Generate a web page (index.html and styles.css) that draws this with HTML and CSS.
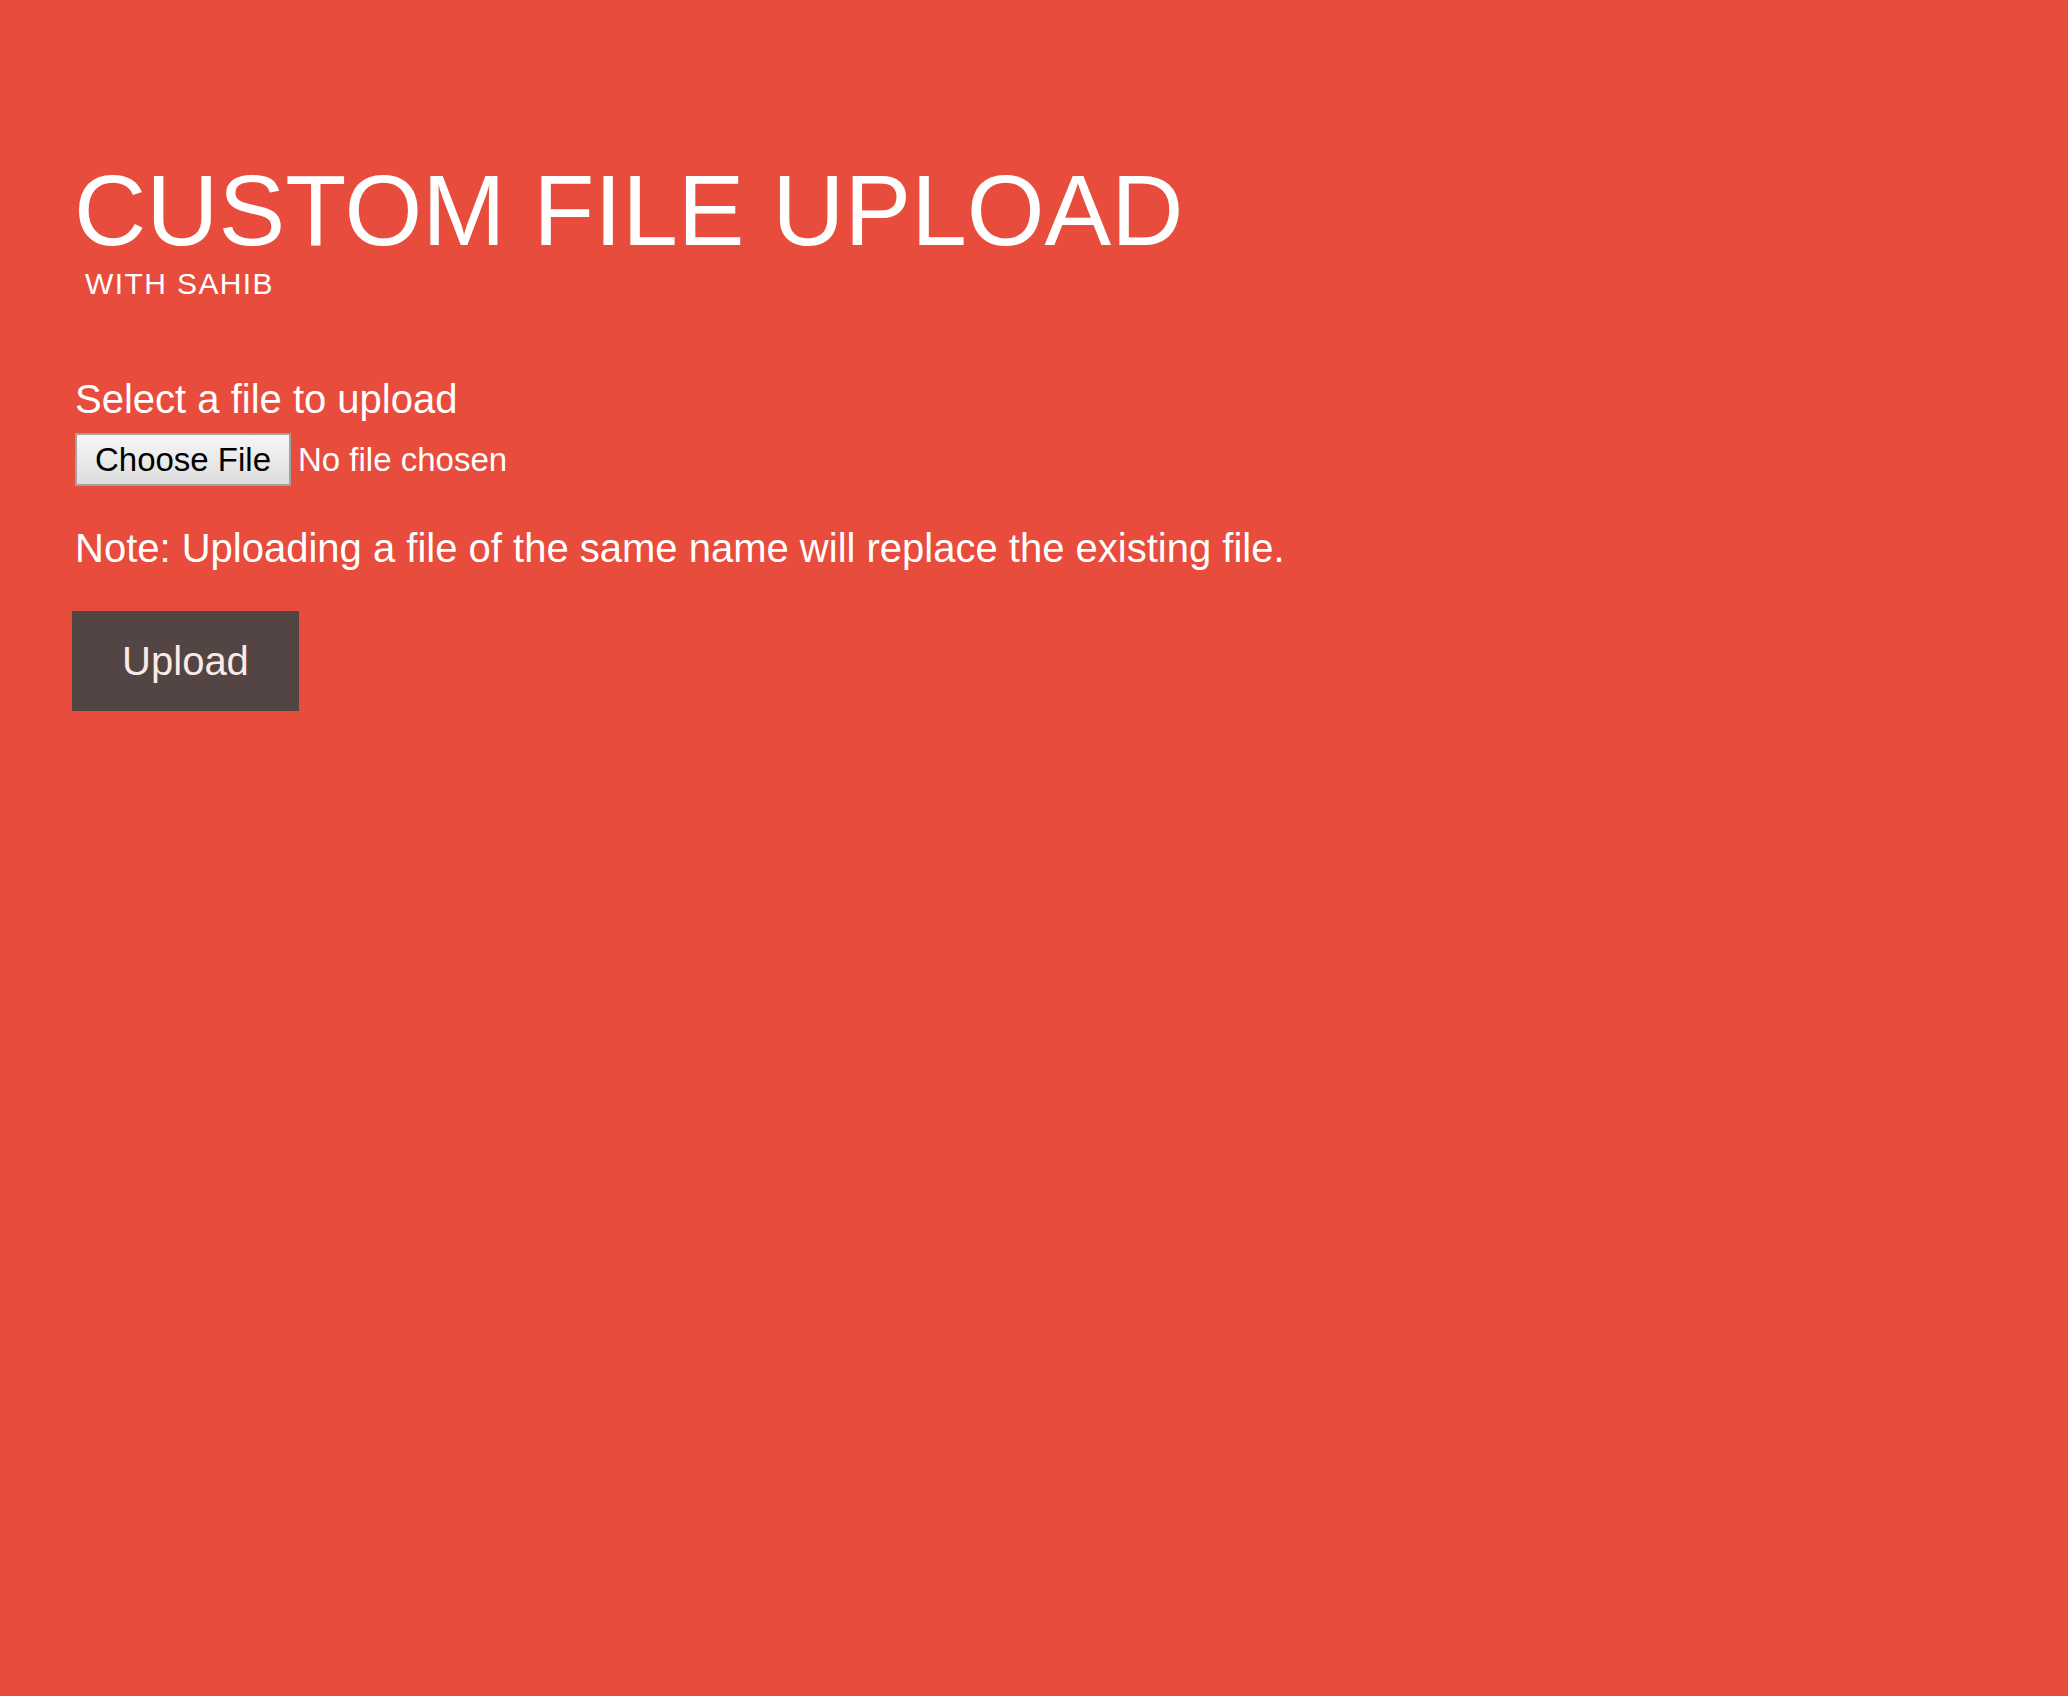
FILE: index.html
```html
<!DOCTYPE html>
<html lang="en">
<head>
<meta charset="utf-8">
<title>Custom File Upload</title>
<link rel="stylesheet" href="styles.css">
</head>
<body>
<main class="page">
  <header class="heading">
    <h1 class="title">CUSTOM FILE UPLOAD</h1>
    <p class="subtitle">WITH SAHIB</p>
  </header>
  <form class="upload-form">
    <label class="field-label" for="file">Select a file to upload</label>
    <div class="file-row">
      <input class="file-input" type="file" id="file" name="file">
    </div>
    <p class="note">Note: Uploading a file of the same name will replace the existing file.</p>
    <button class="upload-btn" type="button">Upload</button>
  </form>
</main>
</body>
</html>
```
FILE: styles.css
```css
html, body {
  margin: 0;
  padding: 0;
  background: #e74c3c;
}
body {
  font-family: "Liberation Sans", Arial, sans-serif;
  color: #ffffff;
  min-height: 1696px;
}
.page {
  padding: 160px 0 0 75px;
}
.heading {
  display: flex;
  flex-direction: column;
}
.title {
  margin: 0 0 0 -1px;
  font-size: 100px;
  line-height: 100px;
  font-weight: 400;
}
.subtitle {
  margin: 6px 0 0 10px;
  font-size: 30px;
  line-height: 36px;
  letter-spacing: 1.4px;
}
.upload-form {
  display: flex;
  flex-direction: column;
  align-items: flex-start;
  margin-top: 74px;
}
.field-label {
  display: block;
  font-size: 40px;
  line-height: 46px;
}
.file-row {
  margin-top: 11px;
  height: 53px;
}
.file-input {
  font-family: "Liberation Sans", Arial, sans-serif;
  font-size: 33px;
  color: #ffffff;
  width: 460px;
  height: 53px;
  line-height: 48px;
  padding: 0;
  margin: 0;
}
.file-input::file-selector-button {
  font-family: "Liberation Sans", Arial, sans-serif;
  font-size: 33px;
  color: #000000;
  height: 53px;
  width: 216px;
  padding: 0;
  margin: 0 7px 0 0;
  border: 2px solid #a2a2a2;
  border-radius: 0;
  background: linear-gradient(#f6f6f6, #dddddd);
}
.note {
  margin: 39px 0 0 0;
  font-size: 40px;
  line-height: 46px;
}
.upload-btn {
  margin: 40px 0 0 -3px;
  width: 227px;
  height: 100px;
  padding: 0;
  border: 0;
  border-radius: 0;
  background: #524543;
  color: #fde9e5;
  font-family: "Liberation Sans", Arial, sans-serif;
  font-size: 40px;
  line-height: 100px;
}
```
